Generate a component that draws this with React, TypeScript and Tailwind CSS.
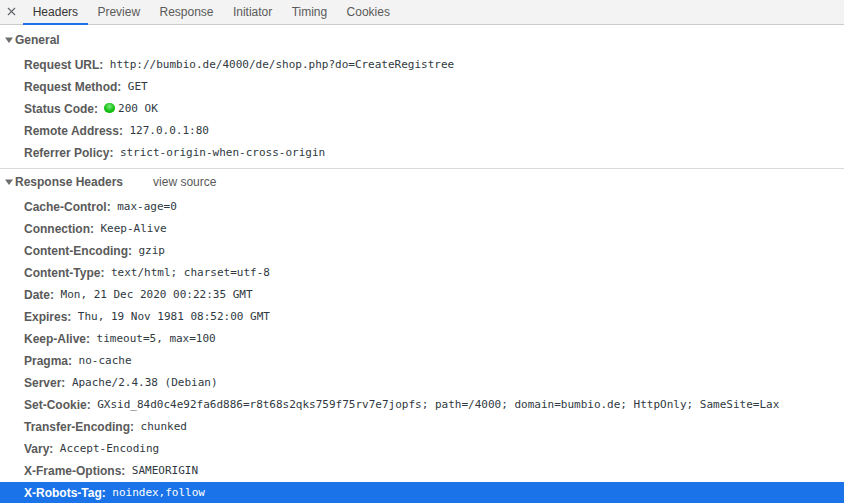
import { ReactNode } from 'react';
import { X } from 'lucide-react';

const tabs = ['Headers', 'Preview', 'Response', 'Initiator', 'Timing', 'Cookies'];

const general = [
  { name: 'Request URL:', value: 'http://bumbio.de/4000/de/shop.php?do=CreateRegistree' },
  { name: 'Request Method:', value: 'GET' },
  { name: 'Status Code:', value: '200 OK', status: true },
  { name: 'Remote Address:', value: '127.0.0.1:80' },
  { name: 'Referrer Policy:', value: 'strict-origin-when-cross-origin' },
];

const responseHeaders = [
  { name: 'Cache-Control:', value: 'max-age=0' },
  { name: 'Connection:', value: 'Keep-Alive' },
  { name: 'Content-Encoding:', value: 'gzip' },
  { name: 'Content-Type:', value: 'text/html; charset=utf-8' },
  { name: 'Date:', value: 'Mon, 21 Dec 2020 00:22:35 GMT' },
  { name: 'Expires:', value: 'Thu, 19 Nov 1981 08:52:00 GMT' },
  { name: 'Keep-Alive:', value: 'timeout=5, max=100' },
  { name: 'Pragma:', value: 'no-cache' },
  { name: 'Server:', value: 'Apache/2.4.38 (Debian)' },
  {
    name: 'Set-Cookie:',
    value: 'GXsid_84d0c4e92fa6d886=r8t68s2qks759f75rv7e7jopfs; path=/4000; domain=bumbio.de; HttpOnly; SameSite=Lax',
  },
  { name: 'Transfer-Encoding:', value: 'chunked' },
  { name: 'Vary:', value: 'Accept-Encoding' },
  { name: 'X-Frame-Options:', value: 'SAMEORIGIN' },
  { name: 'X-Robots-Tag:', value: 'noindex,follow', selected: true },
];

const Row = ({ name, value, status, selected }: { name: string; value: string; status?: boolean; selected?: boolean }) => (
  <div className={`flex h-[22px] items-center pl-6 whitespace-nowrap ${selected ? 'bg-[#1a73e8] text-white' : 'text-[#303942]'}`}>
    <span className={`mr-[6.5px] text-xs font-bold ${selected ? 'text-white' : 'text-[#5a5a5a]'}`}>{name}</span>
    {status && <span className="-ml-[1px] mr-[3.5px] mb-[3px] h-[10px] w-[11px] rounded-full bg-[radial-gradient(circle_at_50%_35%,#7ee87e,#12c212_55%,#0a9f0a)]" />}
    <span className="font-['DejaVu_Sans_Mono',monospace] text-[11px]">{value}</span>
  </div>
);

const SectionTitle = ({ children }: { children: ReactNode }) => (
  <div className="flex h-[22px] items-center pl-[5px] text-xs font-bold text-[#5a5a5a]">
    <svg width="8" height="6" viewBox="0 0 8 6" className="mr-[2px]">
      <path d="M0 0.5h8L4 6z" fill="#6e6e6e" />
    </svg>
    {children}
  </div>
);

export default function App() {
  return (
    <div className="h-[503px] w-[844px] overflow-hidden bg-white font-['Liberation_Sans',sans-serif]">
      <div className="flex h-[25px] items-stretch border-b border-[#cbcbcb] bg-[#f3f3f3]">
        <div className="flex w-[23px] items-center justify-center pb-[2px] text-[#5f6368]">
          <X size={13} strokeWidth={2} />
        </div>
        {tabs.map((tab, i) => (
          <div
            key={tab}
            className={`flex items-center px-[9.7px] text-xs ${i === 0 ? 'border-b-2 border-[#1a73e8] text-[#333333] -mb-px' : 'text-[#5a5a5a]'}`}
          >
            {tab}
          </div>
        ))}
      </div>

      <div className="border-b border-[#dadada] pt-1 pb-1">
        <SectionTitle>General</SectionTitle>
        <div className="pt-[3px]">
          {general.map((row) => (
            <Row key={row.name} {...row} />
          ))}
        </div>
      </div>

      <div className="pt-[2px]">
        <SectionTitle>
          <span>Response Headers</span>
          <span className="ml-[30px] font-normal text-[#5a5a5a]">view source</span>
        </SectionTitle>
        <div className="pt-[3px]">
          {responseHeaders.map((row) => (
            <Row key={row.name} {...row} />
          ))}
        </div>
      </div>
    </div>
  );
}
